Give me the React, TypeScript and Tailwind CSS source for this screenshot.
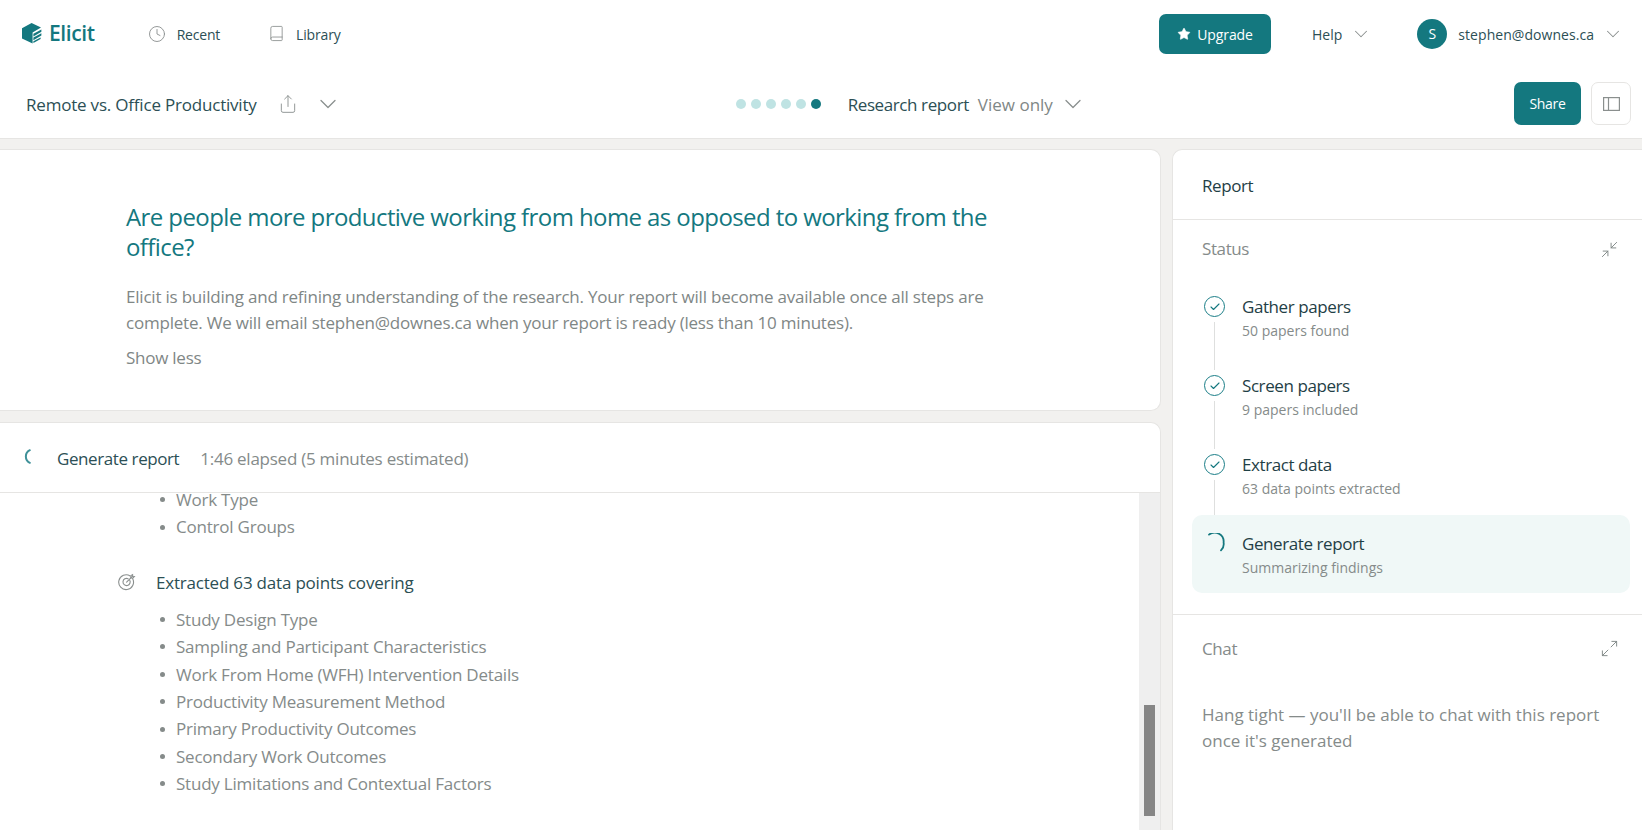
import React from "react";
import { Book, Check, ChevronDown, Clock, Maximize2, Minimize2, Share, Star } from "lucide-react";

const ElicitLogo = () => (
  <svg width="20" height="21" viewBox="0 0 20 21" fill="#14787f">
    <path d="M0 5.2 9.6 0 19 4.4 10.6 9.4V20.6L0 15.4Z" />
    <path d="M11.4 10.8 19.4 6.6V8.8L11.4 13.4Z" />
    <path d="M11.4 14.6 19.4 10.2V12.4L11.4 17.2Z" />
    <path d="M11.4 18.2 18.6 14.4V16L11.4 20Z" />
  </svg>
);

const TargetIcon = () => (
  <svg width="18" height="18" viewBox="0 0 18 18" fill="none" stroke="#8a8f8e" strokeWidth="1.1" strokeLinecap="round">
    <path d="M14.6 5.6a7.4 7.4 0 1 1-2.4-2.6" />
    <path d="M11.6 7a3.6 3.6 0 1 1-1.5-1.3" />
    <path d="M8.6 9.2 14.4 3.4" />
    <path d="M13 2.6 12.8 4.9 15 5 16.4 3.4 14.7 3.2 14.6 1.6Z" />
  </svg>
);

const Spinner = ({ className }: { className: string }) => (
  <svg className={className} viewBox="0 0 21 21" fill="none" stroke="#14787f" strokeWidth="1.8" strokeLinecap="round">
    <path d="M5 1.6A9 9 0 0 1 19.6 9.5 9 9 0 0 1 17 17.4" />
  </svg>
);

const steps = [
  { title: "Gather papers", sub: "50 papers found", done: true },
  { title: "Screen papers", sub: "9 papers included", done: true },
  { title: "Extract data", sub: "63 data points extracted", done: true },
  { title: "Generate report", sub: "Summarizing findings", done: false },
];

const topList = ["Work Type", "Control Groups"];
const dataList = [
  "Study Design Type",
  "Sampling and Participant Characteristics",
  "Work From Home (WFH) Intervention Details",
  "Productivity Measurement Method",
  "Primary Productivity Outcomes",
  "Secondary Work Outcomes",
  "Study Limitations and Contextual Factors",
];

const Bullets = ({ items }: { items: string[] }) => (
  <ul className="pl-[47px] text-[17px] leading-[27.4px] tracking-[-0.22px] text-[#858b8a]">
    {items.map((item) => (
      <li key={item} className="flex items-center">
        <span className="mr-[11px] h-[5px] w-[5px] rounded-full bg-[#858b8a]"></span>
        {item}
      </li>
    ))}
  </ul>
);

const App = () => {
  return (
    <div className="flex h-[830px] w-[1642px] flex-col overflow-hidden bg-[#f2f1ef] font-['Open_Sans',sans-serif] text-[#2c4f55]">
      {/* Top bars */}
      <header className="h-[139px] shrink-0 border-b border-[#e6e5e3] bg-white">
        <div className="flex h-[67px] items-center pl-[22px] pr-[18px]">
          <ElicitLogo />
          <span className="ml-[7px] text-[21px] font-semibold tracking-[-0.4px] text-[#14787f]">Elicit</span>
          <Clock className="ml-[53px] text-[#8a8f8e]" size={18} strokeWidth={1.2} />
          <span className="ml-[11px] mt-[2px] text-[14px] tracking-[-0.2px]">Recent</span>
          <Book className="ml-[48px] text-[#8a8f8e]" size={17} strokeWidth={1.2} />
          <span className="ml-[11px] mt-[2px] text-[14px] tracking-[-0.15px]">Library</span>

          <button className="ml-auto flex h-[40px] w-[112px] items-center justify-center gap-[6px] rounded-[7px] bg-[#14787f] text-[14px] tracking-[-0.1px] text-white">
            <Star size={14} fill="white" strokeWidth={1} />
            <span className="mt-[1px]">Upgrade</span>
          </button>
          <span className="ml-[41px] mt-[2px] text-[14px]">Help</span>
          <ChevronDown className="ml-[8px] text-[#8a8f8e]" size={22} strokeWidth={1.1} />
          <div className="ml-[45px] flex h-[30px] w-[30px] items-center justify-center rounded-full bg-[#14787f] text-[14px] text-white">S</div>
          <span className="ml-[11px] mt-[2px] text-[14px] tracking-[0.05px]">stephen@downes.ca</span>
          <ChevronDown className="ml-[8px] text-[#8a8f8e]" size={22} strokeWidth={1.1} />
        </div>
        <div className="mt-[2px] flex h-[69px] items-center pl-[26px] pr-[11px]">
          <span className="mt-[2px] text-[17px] tracking-[-0.2px]">Remote vs. Office Productivity</span>
          <Share className="ml-[21px] text-[#8a8f8e]" size={20} strokeWidth={1.1} />
          <ChevronDown className="ml-[16px] text-[#8a8f8e]" size={28} strokeWidth={1.1} />
          <div className="ml-[394px] flex gap-[5px]">
            {[0, 1, 2, 3, 4].map((i) => (
              <span key={i} className="h-[10px] w-[10px] rounded-full bg-[#bfe3e3]"></span>
            ))}
            <span className="h-[10px] w-[10px] rounded-full bg-[#14787f]"></span>
          </div>
          <span className="ml-[27px] mt-[2px] text-[17px] tracking-[-0.4px]">Research report</span>
          <span className="ml-[9px] mt-[2px] text-[17px] text-[#7f8786]">View only</span>
          <ChevronDown className="ml-[6px] text-[#8a8f8e]" size={28} strokeWidth={1.1} />
          <button className="ml-auto flex h-[43px] w-[67px] items-center justify-center rounded-[7px] bg-[#14787f] text-[14px] tracking-[-0.3px] text-white">Share</button>
          <button className="ml-[10px] flex h-[43px] w-[40px] items-center justify-center rounded-[7px] border border-[#e6e5e3] bg-white">
            <svg width="17" height="14" viewBox="0 0 17 14" fill="none" stroke="#8a8f8e" strokeWidth="1.2">
              <rect x="0.6" y="0.6" width="15.8" height="12.8" />
              <path d="M5.5 0.6V13.4" />
            </svg>
          </button>
        </div>
      </header>

      {/* Body */}
      <div className="flex min-h-0 flex-1 gap-[11px] pt-[10px]">
        <main className="flex w-[1161px] shrink-0 flex-col gap-[11px]">
          <section className="h-[262px] shrink-0 rounded-r-[10px] border border-l-0 border-[#e6e5e3] bg-white pl-[126px] pr-[165px] pt-[52px]">
            <h1 className="text-[24px] leading-[30px] tracking-[-0.585px] text-[#14787f]">
              Are people more productive working from home as opposed to working from the office?
            </h1>
            <p className="mt-[22px] text-[17px] leading-[26px] tracking-[-0.21px] text-[#7f8786]">
              Elicit is building and refining understanding of the research. Your report will become available once all steps are complete. We will email stephen@downes.ca when your report is ready (less than 10 minutes).
            </p>
            <p className="mt-[9px] text-[17px] leading-[26px] tracking-[-0.25px] text-[#7f8786]">Show less</p>
          </section>

          <section className="flex min-h-0 flex-1 flex-col rounded-tr-[10px] border-r border-t border-[#e6e5e3] bg-white">
            <div className="flex h-[70px] shrink-0 items-center border-b border-[#e6e5e3] pl-[21px] pt-[2px]">
              <svg className="-mt-[4px]" width="10" height="15" viewBox="0 0 10 15" fill="none" stroke="#3f9199" strokeWidth="2" strokeLinecap="round">
                <path d="M8.8 1.2A7 7 0 0 0 8.8 13.8" />
              </svg>
              <span className="ml-[26px] text-[17px] tracking-[-0.41px]">Generate report</span>
              <span className="ml-[21px] text-[17px] tracking-[-0.25px] text-[#858b8a]">1:46 elapsed (5 minutes estimated)</span>
            </div>
            <div className="flex min-h-0 flex-1">
              <div className="-mt-[7px] flex-1 pl-[113px]">
                <Bullets items={topList} />
                <div className="mb-[10px] mt-[28px] flex h-[27px] items-center">
                  <div className="flex w-[43px] shrink-0 pl-[5px]">
                    <TargetIcon />
                  </div>
                  <span className="text-[17px] tracking-[-0.2px]">Extracted 63 data points covering</span>
                </div>
                <Bullets items={dataList} />
              </div>
              <div className="w-[21px] shrink-0 bg-[#efefef] pl-[5px] pt-[212px]">
                <div className="h-[111px] w-[11px] bg-[#868686]"></div>
              </div>
            </div>
          </section>
        </main>

        <aside className="min-w-0 flex-1 rounded-tl-[10px] border-l border-t border-[#e6e5e3] bg-white">
          <div className="flex h-[70px] items-center border-b border-[#e6e5e3] pl-[29px] pt-[2px] text-[17px] tracking-[-0.42px] text-[#1f4046]">Report</div>
          <div className="flex h-[58px] items-center justify-between pl-[29px] pr-[23px] text-[17px] tracking-[-0.4px] text-[#858b8a]">
            Status
            <Minimize2 className="text-[#7f8786]" size={19} strokeWidth={1.2} />
          </div>
          <div className="border-b border-[#e6e5e3] pb-[21px] pl-[19px] pr-[12px]">
            {steps.map((step) => (
              <div key={step.title} className={step.done ? "relative flex h-[79px] pt-[18px]" : "relative flex h-[78px] rounded-[10px] bg-[#f0f8f7] pt-[18px]"}>
                {step.done ? <span className="absolute left-[22px] top-[44px] h-[48px] w-px bg-[#dedfde]"></span> : null}
                <div className="w-[50px] shrink-0 pl-[12px]">
                  {step.done ? (
                    <span className="flex h-[21px] w-[21px] items-center justify-center rounded-full border-[1.75px] border-[#1a7e87] bg-white text-[#14787f]">
                      <Check size={12} strokeWidth={2.2} />
                    </span>
                  ) : (
                    <Spinner className="h-[21px] w-[21px]" />
                  )}
                </div>
                <div>
                  <div className="text-[17px] leading-[22px] tracking-[-0.42px] text-[#1f4046]">{step.title}</div>
                  <div className="mt-[3px] text-[14px] leading-[19px] text-[#858b8a]">{step.sub}</div>
                </div>
              </div>
            ))}
          </div>
          <div className="flex h-[67px] items-center justify-between pl-[29px] pr-[23px] text-[17px] tracking-[-0.4px] text-[#858b8a]">
            Chat
            <Maximize2 className="text-[#7f8786]" size={19} strokeWidth={1.2} />
          </div>
          <p className="mt-[20px] pl-[29px] pr-[30px] text-[17px] leading-[26px] text-[#858b8a]">
            Hang tight — you'll be able to chat with this report once it's generated
          </p>
        </aside>
      </div>
    </div>
  );
};

export default App;
